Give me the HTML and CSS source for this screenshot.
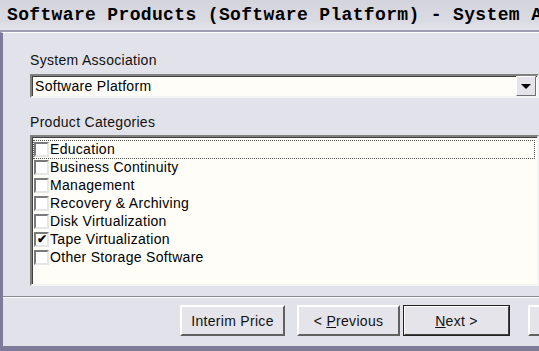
FILE: index.html
```html
<!DOCTYPE html>
<html lang="en">
<head>
    <meta charset="UTF-8">
    <title>Software Products (Software Platform) - System Association</title>
    <link rel="stylesheet" href="styles.css">
</head>
<body>
    <div class="window">
        <div class="titlebar">Software Products (Software Platform) - System A</div>
        <div class="frame">
            <div class="content">
                <div class="label">System Association</div>
                <div class="combo">
                    <span class="combo-text">Software Platform</span>
                    <span class="combo-btn"><span class="arrow"></span></span>
                </div>

                <div class="label label-gap">Product Categories</div>
                <div class="listbox">
                    <div class="item focused"><span class="check"></span><span class="item-text">Education</span></div>
                    <div class="item"><span class="check"></span><span class="item-text">Business Continuity</span></div>
                    <div class="item"><span class="check"></span><span class="item-text">Management</span></div>
                    <div class="item"><span class="check"></span><span class="item-text">Recovery &amp; Archiving</span></div>
                    <div class="item"><span class="check"></span><span class="item-text">Disk Virtualization</span></div>
                    <div class="item"><span class="check checked">&#10004;</span><span class="item-text">Tape Virtualization</span></div>
                    <div class="item"><span class="check"></span><span class="item-text">Other Storage Software</span></div>
                </div>
            </div>

            <div class="separator"></div>

            <div class="buttons">
                <button class="btn btn-interim">Interim Price</button>
                <button class="btn btn-prev">&lt; <u>P</u>revious</button>
                <button class="btn btn-default"><u>N</u>ext &gt;</button>
                <button class="btn btn-cut"></button>
            </div>
        </div>
    </div>
</body>
</html>
```

FILE: styles.css
```css
html, body {
    margin: 0;
    padding: 0;
}
body {
    width: 539px;
    height: 351px;
    overflow: hidden;
    background: #e2e2ea;
    font-family: "Liberation Sans", Arial, sans-serif;
    font-size: 14px;
    letter-spacing: 0.3px;
    color: #000;
}
.window {
    display: flex;
    flex-direction: column;
    height: 351px;
}
.titlebar {
    height: 30px;
    line-height: 31px;
    padding-left: 7px;
    white-space: nowrap;
    overflow: hidden;
    font-family: "Liberation Mono", "Courier New", monospace;
    font-weight: bold;
    font-size: 18px;
    letter-spacing: 0.35px;
    background: linear-gradient(#d4d4dc, #dadae2 70%, #e4e4ea);
    border-bottom: 2px solid #9c9cb2;
}
.frame {
    flex: 1;
    display: flex;
    flex-direction: column;
    overflow: hidden;
    border-top: 1px solid #ffffff;
    border-left: 3px solid #7c7c9a;
    border-bottom: 5px solid #7c7c9a;
    background: #e2e2ea;
}
.content {
    padding: 19px 0 0 27px;
}
.label {
    height: 18px;
    line-height: 17px;
    color: #111;
}
.label-gap {
    margin-top: 16px;
}
.combo {
    display: flex;
    align-items: center;
    height: 20px;
    margin-top: 4px;
    background: #fffdf8;
    border: 2px solid;
    border-color: #808080 #f4f4f4 #f4f4f4 #808080;
    box-shadow: inset 1px 1px 0 #404040;
}
.combo-text {
    flex: 1;
    padding-left: 3px;
}
.combo-btn {
    display: flex;
    align-items: center;
    justify-content: center;
    width: 18px;
    height: 18px;
    margin-right: 1px;
    background: #e4e4ea;
    border: 1px solid;
    border-color: #ffffff #707070 #707070 #ffffff;
}
.arrow {
    width: 0;
    height: 0;
    border-left: 5px solid transparent;
    border-right: 5px solid transparent;
    border-top: 5px solid #000;
    margin-top: 1px;
}
.listbox {
    height: 144px;
    margin-top: 3px;
    padding: 3px 2px 0 1px;
    background: #fffdf8;
    border: 2px solid;
    border-color: #808080 #f4f4f4 #f4f4f4 #808080;
    box-shadow: inset 1px 1px 0 #404040;
}
.item {
    display: flex;
    align-items: center;
    height: 17px;
    border: 1px dotted transparent;
    margin-bottom: -1px;
}
.item.focused {
    border-color: #555;
}
.check {
    flex-shrink: 0;
    width: 15px;
    height: 15px;
    margin-right: 1px;
    box-sizing: border-box;
    border: 2px solid;
    border-color: #7a7a7a #e6e6e6 #e6e6e6 #7a7a7a;
    background: #fff;
    font-size: 12px;
    font-weight: bold;
    line-height: 11px;
    letter-spacing: 0;
    text-align: center;
}
.item-text {
    line-height: 17px;
}
.separator {
    margin-top: 10px;
    height: 0;
    border-top: 1px solid #8a8a9a;
    border-bottom: 1px solid #ffffff;
}
.buttons {
    display: flex;
    padding: 7px 0 0 177px;
}
.btn {
    width: 105px;
    height: 31px;
    padding: 0;
    flex-shrink: 0;
    font-family: "Liberation Sans", Arial, sans-serif;
    font-size: 14px;
    letter-spacing: 0.3px;
    color: #111;
    background: #e4e4ea;
    border: 2px solid;
    border-color: #ffffff #606060 #606060 #ffffff;
}
.btn-prev {
    width: 103px;
    margin-left: 12px;
}
.btn-default {
    width: 107px;
    margin-left: 3px;
    outline: 1px solid #222;
    outline-offset: -1px;
    border-color: #ffffff #404040 #404040 #ffffff;
}
.btn-cut {
    width: 40px;
    margin-left: 18px;
}
```
